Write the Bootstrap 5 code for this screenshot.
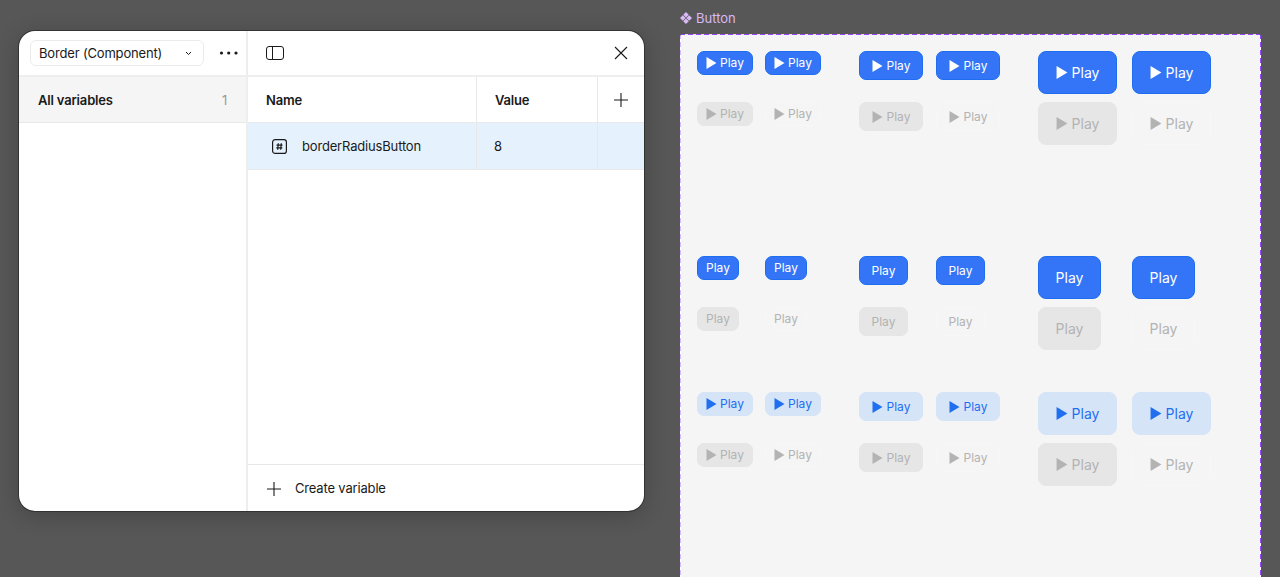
<!DOCTYPE html>
<html lang="en">
<head>
<meta charset="utf-8">
<title>Variables</title>
<link href="https://cdn.jsdelivr.net/npm/bootstrap@5.3.0/dist/css/bootstrap.min.css" rel="stylesheet">
<style>
html,body{height:577px;overflow:hidden}
body{background:#575757;font-family:Inter,"Liberation Sans",sans-serif;font-size:13px;color:#1a1a1a}
.stage{padding-left:19px;height:577px}
.dialog{width:625px;height:480px;margin-top:31px;background:#fff;border-radius:16px;overflow:hidden;box-shadow:0 0 0 1px rgba(30,30,30,.55),0 4px 22px rgba(0,0,0,.22);flex:none;letter-spacing:-.17px}
.side{width:229px;border-right:2px solid #eee;flex:none}
.side-top{height:46px;padding:9px 8px 0 11px;border-bottom:2px solid #eee}
.picker{width:174px;height:26px;border:1px solid #ebebeb;border-radius:6px;padding:0 11px 0 8px;line-height:1}
.side-row{height:46px;padding:2px 19px 0;background:#f5f5f5;border-bottom:1px solid #e8e8e8;font-weight:600}
.count{color:#999;font-weight:400}
.top-bar{height:46px;padding:0 16px 0 18px;border-bottom:2px solid #eee}
.vars{display:grid;grid-template-columns:229px 121px 1fr}
.cellx{height:47px;padding-top:2px;border-bottom:1px solid #e8e8e8;border-right:1px solid #e8e8e8;padding-left:18px;display:flex;align-items:center}
.cellx:nth-child(3n){border-right:0;padding-left:16px}
.cellx.head{font-weight:600;height:46px;padding-top:2px}
.cellx.head.addcol{padding-top:0}
.sel{background:#e5f2fd}
.valcell{padding-left:17px}
.hash{margin:-2px 15px 0 6px}
.foot{height:47px;border-top:1px solid #e8e8e8;padding-left:19px;padding-top:1px;gap:14px}
.frame-col{margin-left:36px;margin-top:10px;width:581px;flex:none}
.frame-label{height:16px;margin-bottom:8px;padding-left:0;color:#d8b9f6;font-size:13px;line-height:16px}
.frame-label svg{margin-right:4px;vertical-align:-1px}
.canvas{height:600px;border-radius:3px;padding:17px 0 0 17px;
  background:
    repeating-linear-gradient(90deg,#9747ff 0 5px,#e2e2e2 5px 8px) top/100% 1px no-repeat,
    repeating-linear-gradient(180deg,#d9b8ff 0 5px,#fff 5px 8px) left/1px 100% no-repeat,
    repeating-linear-gradient(180deg,#9747ff 0 5px,#fff 5px 8px) right/1px 100% no-repeat,
    #f5f5f5}
.group{display:flex}
.group-b{margin-top:103px}
.group-c{margin-top:34px}
.block{display:grid;row-gap:0;grid-auto-rows:51px;justify-items:start;align-items:start}
.blk-s{grid-template-columns:68px 94px}
.blk-m{grid-template-columns:77px 102px}
.blk-l{grid-template-columns:94px 94px}
.btn.play{display:inline-flex;align-items:center;justify-content:center;gap:3px;border-radius:7px;padding:0;font-size:12px;line-height:1;border:1px solid transparent;--bs-btn-disabled-opacity:1}
.btn.sz-s{width:56px;height:24px}
.btn.sz-m{width:64px;height:29px;gap:4px}
.btn.sz-l{width:79px;height:43px;font-size:14px;gap:4px;border-radius:8px}
.group-b .sz-s{width:42px}
.group-b .sz-m{width:49px}
.group-b .sz-l{width:63px}
.btn.fill{background:#3375f6;border-color:#1f6ef0;color:#fff}
.btn.tint{background:#d6e4f8;border-color:#d6e4f8;color:#1f6ff0}
.btn.off-fill{background:#e6e6e6;border-color:#e6e6e6;color:#b3b3b3}
.btn.off-plain{background:#f5f5f5;border-color:#f7f7f7;color:#b3b3b3}
.tri{width:11px;height:12px;fill:currentColor;flex:none}
.sz-l .tri{width:12px;height:13px}
</style>
</head>
<body>
<svg class="d-none"><symbol id="tri" viewBox="0 0 11 12"><path d="M.5 0 10.5 6 .5 12z"/></symbol></svg>
<div class="stage d-flex align-items-start">
  <div class="dialog d-flex">
    <div class="side d-flex flex-column">
      <div class="side-top d-flex justify-content-between">
        <div class="picker d-flex align-items-center justify-content-between"><span>Border (Component)</span>
          <svg width="7" height="5" viewBox="0 0 7 5" fill="none" stroke="#1a1a1a"><path d="M1 1l2.5 2.5L6 1"/></svg></div>
        <svg class="mt-2" width="19" height="10" viewBox="0 0 19 10" fill="#1a1a1a"><circle cx="2.5" cy="5" r="1.6"/><circle cx="9.7" cy="5" r="1.6"/><circle cx="17" cy="5" r="1.6"/></svg>
      </div>
      <div class="side-row d-flex align-items-center justify-content-between"><span>All variables</span><span class="count">1</span></div>
    </div>
    <div class="flex-grow-1 d-flex flex-column">
      <div class="top-bar d-flex align-items-center justify-content-between">
        <svg width="19" height="15" viewBox="0 0 19 15" fill="none" stroke="#1a1a1a"><rect x=".5" y=".5" width="17" height="13" rx="2.5"/><path d="M6.5 .5v13"/></svg>
        <svg width="14" height="14" viewBox="0 0 14 14" fill="none" stroke="#1a1a1a" stroke-width="1.1"><path d="M1 1l12 12M13 1 1 13"/></svg>
      </div>
      <div class="vars">
        <div class="cellx head">Name</div>
        <div class="cellx head">Value</div>
        <div class="cellx head addcol"><svg width="14" height="14" viewBox="0 0 14 14" fill="none" stroke="#1a1a1a" stroke-width="1.1"><path d="M7 0v14M0 7h14"/></svg></div>
        <div class="cellx sel"><svg class="hash" width="15" height="15" viewBox="0 0 15 15" fill="none" stroke="#1a1a1a"><rect x=".6" y=".6" width="13.8" height="13.8" rx="2.5" stroke-width="1.2"/><path d="M6.3 4.2 5.7 10.8M9.3 4.2 8.7 10.8M4.5 6.2h6M4.3 8.8h6" stroke-width="1.2"/></svg>borderRadiusButton</div>
        <div class="cellx sel valcell">8</div>
        <div class="cellx sel"></div>
      </div>
      <div class="flex-grow-1"></div>
      <div class="foot d-flex align-items-center pe-2">
        <svg width="14" height="14" viewBox="0 0 14 14" fill="none" stroke="#1a1a1a" stroke-width="1.1"><path d="M7 0v14M0 7h14"/></svg>
        <span>Create variable</span>
      </div>
    </div>
  </div>

  <div class="frame-col">
    <div class="frame-label"><svg width="12" height="12" viewBox="0 0 12 12" fill="currentColor"><path d="M6 0 8.8 2.8 6 5.6 3.2 2.8zM2.8 3.2 5.6 6 2.8 8.8 0 6zM9.2 3.2 12 6 9.2 8.8 6.4 6zM6 6.4 8.8 9.2 6 12 3.2 9.2z"/></svg>Button</div>
    <div class="canvas">
      <div class="group">
        <div class="block blk-s">
          <button class="btn play sz-s fill"><svg class="tri"><use href="#tri"/></svg>Play</button><button class="btn play sz-s fill"><svg class="tri"><use href="#tri"/></svg>Play</button>
          <button class="btn play sz-s off-fill" disabled><svg class="tri"><use href="#tri"/></svg>Play</button><button class="btn play sz-s off-plain" disabled><svg class="tri"><use href="#tri"/></svg>Play</button>
        </div>
        <div class="block blk-m">
          <button class="btn play sz-m fill"><svg class="tri"><use href="#tri"/></svg>Play</button><button class="btn play sz-m fill"><svg class="tri"><use href="#tri"/></svg>Play</button>
          <button class="btn play sz-m off-fill" disabled><svg class="tri"><use href="#tri"/></svg>Play</button><button class="btn play sz-m off-plain" disabled><svg class="tri"><use href="#tri"/></svg>Play</button>
        </div>
        <div class="block blk-l">
          <button class="btn play sz-l fill"><svg class="tri"><use href="#tri"/></svg>Play</button><button class="btn play sz-l fill"><svg class="tri"><use href="#tri"/></svg>Play</button>
          <button class="btn play sz-l off-fill" disabled><svg class="tri"><use href="#tri"/></svg>Play</button><button class="btn play sz-l off-plain" disabled><svg class="tri"><use href="#tri"/></svg>Play</button>
        </div>
      </div>
      <div class="group group-b">
        <div class="block blk-s">
          <button class="btn play sz-s fill">Play</button><button class="btn play sz-s fill">Play</button>
          <button class="btn play sz-s off-fill" disabled>Play</button><button class="btn play sz-s off-plain" disabled>Play</button>
        </div>
        <div class="block blk-m">
          <button class="btn play sz-m fill">Play</button><button class="btn play sz-m fill">Play</button>
          <button class="btn play sz-m off-fill" disabled>Play</button><button class="btn play sz-m off-plain" disabled>Play</button>
        </div>
        <div class="block blk-l">
          <button class="btn play sz-l fill">Play</button><button class="btn play sz-l fill">Play</button>
          <button class="btn play sz-l off-fill" disabled>Play</button><button class="btn play sz-l off-plain" disabled>Play</button>
        </div>
      </div>
      <div class="group group-c">
        <div class="block blk-s">
          <button class="btn play sz-s tint"><svg class="tri"><use href="#tri"/></svg>Play</button><button class="btn play sz-s tint"><svg class="tri"><use href="#tri"/></svg>Play</button>
          <button class="btn play sz-s off-fill" disabled><svg class="tri"><use href="#tri"/></svg>Play</button><button class="btn play sz-s off-plain" disabled><svg class="tri"><use href="#tri"/></svg>Play</button>
        </div>
        <div class="block blk-m">
          <button class="btn play sz-m tint"><svg class="tri"><use href="#tri"/></svg>Play</button><button class="btn play sz-m tint"><svg class="tri"><use href="#tri"/></svg>Play</button>
          <button class="btn play sz-m off-fill" disabled><svg class="tri"><use href="#tri"/></svg>Play</button><button class="btn play sz-m off-plain" disabled><svg class="tri"><use href="#tri"/></svg>Play</button>
        </div>
        <div class="block blk-l">
          <button class="btn play sz-l tint"><svg class="tri"><use href="#tri"/></svg>Play</button><button class="btn play sz-l tint"><svg class="tri"><use href="#tri"/></svg>Play</button>
          <button class="btn play sz-l off-fill" disabled><svg class="tri"><use href="#tri"/></svg>Play</button><button class="btn play sz-l off-plain" disabled><svg class="tri"><use href="#tri"/></svg>Play</button>
        </div>
      </div>
    </div>
  </div>
</div>
<script src="https://cdn.jsdelivr.net/npm/bootstrap@5.3.0/dist/js/bootstrap.bundle.min.js"></script>
</body>
</html>
